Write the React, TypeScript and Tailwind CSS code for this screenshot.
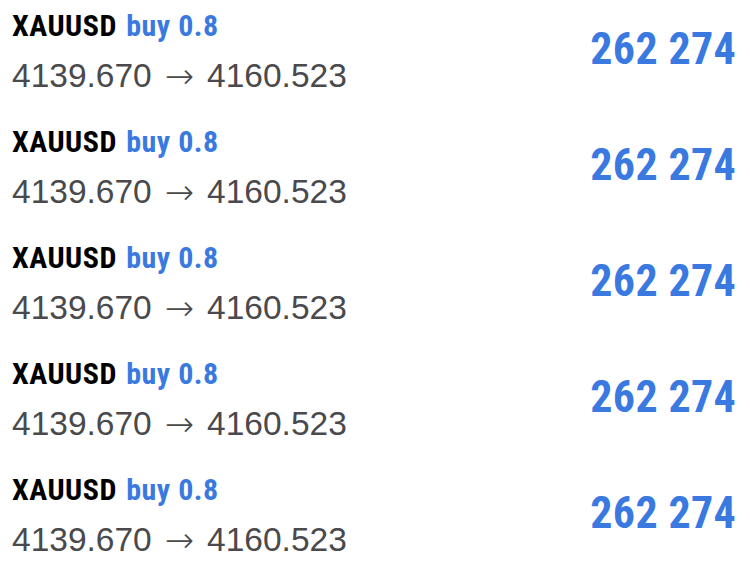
const trades = Array.from({ length: 5 }, () => ({
  symbol: "XAUUSD",
  side: "buy",
  volume: "0.8",
  open: "4139.670",
  close: "4160.523",
  profit: "262 274",
}));

export default function App() {
  return (
    <div className="w-[750px] h-[573px] overflow-hidden bg-white">
      {trades.map((t, i) => (
        <div key={i} className="h-[116px] flex items-start justify-between pl-3 pr-[14px]">
          <div className="pt-[6px]">
            <div className="h-[40px] leading-[40px] text-[30px] font-bold font-stretch-condensed tracking-[0.5px] whitespace-nowrap font-['Roboto',sans-serif]">
              <span className="text-black">{t.symbol}</span>{" "}
              <span className="ml-[2px] text-[#3a7ae0]">
                {t.side} {t.volume}
              </span>
            </div>
            <div className="mt-[10px] h-[40px] leading-[40px] text-[33.5px] text-[#4a4a4d] whitespace-nowrap font-['Liberation_Sans',sans-serif]">
              {t.open}
              <span className="inline-block mx-[13px] font-['DejaVu_Sans',sans-serif] font-extralight text-[35px] leading-[40px] align-top">→</span>
              {t.close}
            </div>
          </div>
          <div className="mt-[27px] leading-[44px] text-[44px] font-bold font-stretch-condensed text-[#3a7ae0] tracking-[0.3px] whitespace-nowrap font-['Roboto',sans-serif]">
            {t.profit}
          </div>
        </div>
      ))}
    </div>
  );
}
